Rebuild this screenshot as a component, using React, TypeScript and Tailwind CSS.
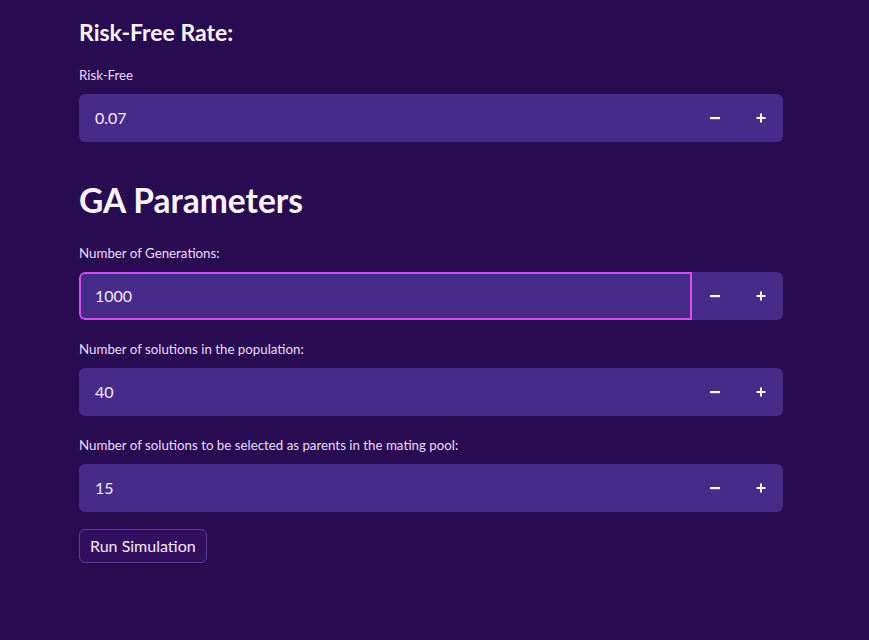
import React from 'react';

const font = { fontFamily: '"Source Sans Pro", Lato, sans-serif' };

function NumberInput({ value, focused }: { value: string; focused?: boolean }) {
  return (
    <div className="flex h-12 w-full rounded-md bg-[#472b8a] overflow-hidden">
      <div
        className={
          'flex flex-1 items-center pl-[14px] text-base text-[#f3ecff] ' +
          (focused ? 'border-2 border-[#d94df0] rounded-l-md' : 'border-2 border-transparent')
        }
      >
        {value}
      </div>
      <button className="flex w-[46px] items-center justify-center text-white">
        <svg width="10" height="10" viewBox="0 0 10 10">
          <rect x="0" y="4" width="10" height="2.2" fill="currentColor" />
        </svg>
      </button>
      <button className="flex w-[45px] items-center justify-center text-white">
        <svg width="10" height="10" viewBox="0 0 10 10">
          <rect x="0.5" y="4" width="9" height="2" fill="currentColor" />
          <rect x="4" y="0.5" width="2" height="9" fill="currentColor" />
        </svg>
      </button>
    </div>
  );
}

function Field({ label, value, focused }: { label: string; value: string; focused?: boolean }) {
  return (
    <div className="flex flex-col">
      <label className="mb-[9px] text-[13.3px] leading-5 text-[#e9defc]">{label}</label>
      <NumberInput value={value} focused={focused} />
    </div>
  );
}

export default function App() {
  return (
    <div className="min-h-[640px] w-full bg-[#290b52]" style={font}>
      <div className="ml-[79px] flex w-[704px] flex-col pt-[16px]">
        <h3 className="text-[23px] font-bold leading-8 text-[#faf5ff]">Risk-Free Rate:</h3>
        <div className="mt-[17px]">
          <Field label="Risk-Free" value="0.07" />
        </div>

        <h2 className="mt-[36px] text-[33.5px] font-bold leading-[44px] text-[#faf5ff]">GA Parameters</h2>

        <div className="mt-[21px] flex flex-col gap-[19px]">
          <Field label="Number of Generations:" value="1000" focused />
          <Field label="Number of solutions in the population:" value="40" />
          <Field label="Number of solutions to be selected as parents in the mating pool:" value="15" />
        </div>

        <div className="mt-[17px]">
          <button className="h-[34px] rounded-md border border-[#5b3d92] bg-[#33105f] px-[10px] text-base text-[#f3ecff]">
            Run Simulation
          </button>
        </div>
      </div>
    </div>
  );
}
